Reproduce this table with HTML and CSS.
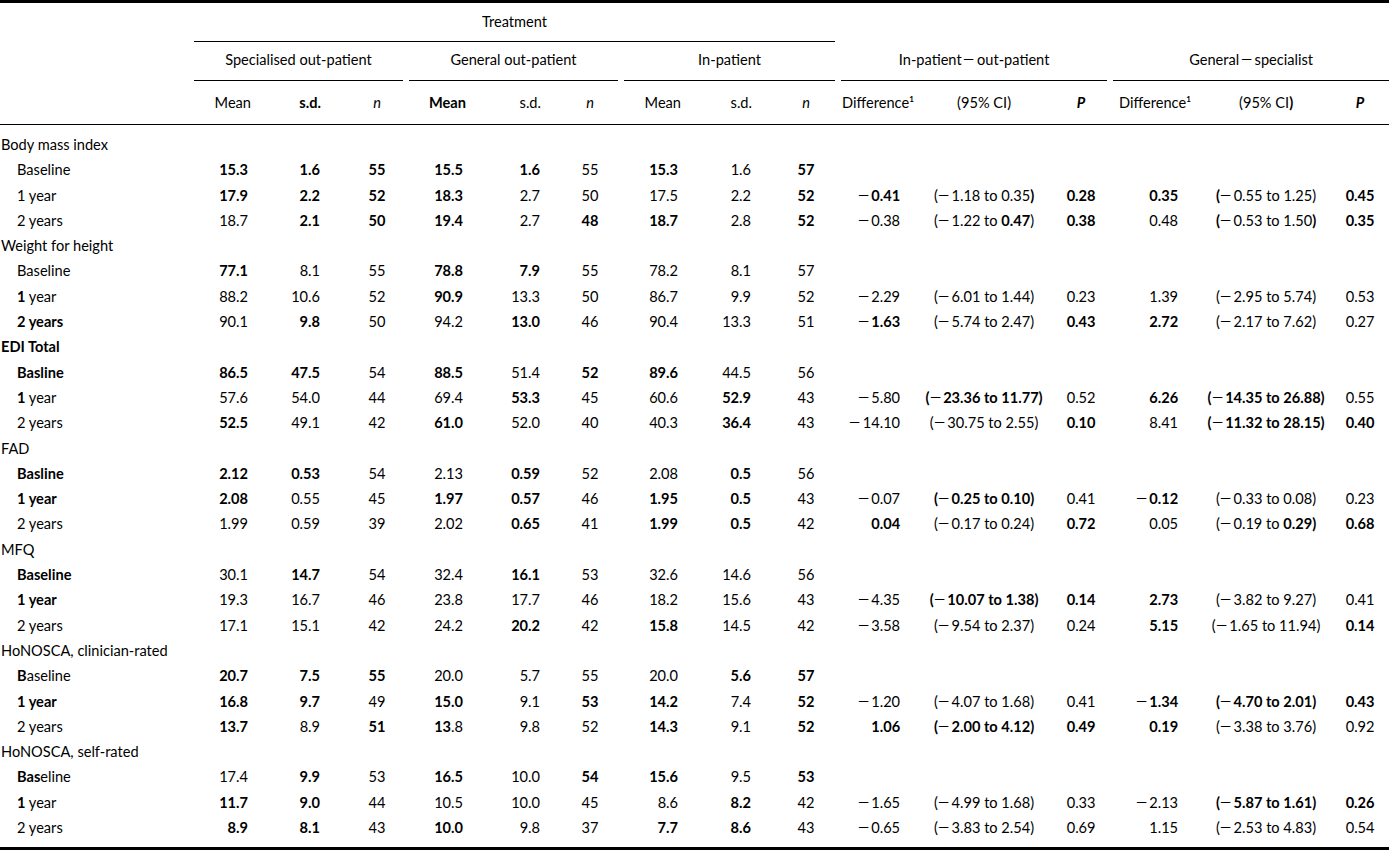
FILE: index.html
```html
<!DOCTYPE html>
<html lang="en">
<head>
<meta charset="utf-8">
<title>Outcome table</title>
<link rel="stylesheet" href="styles.css">
</head>
<body>
<table class="t">
  <colgroup>
    <col class="w-lbl"><col class="w-mean"><col class="w-sd1"><col class="w-n1">
    <col class="w-mean"><col class="w-sd2"><col class="w-n2">
    <col class="w-mean"><col class="w-sd3"><col class="w-n3">
    <col class="w-diff1"><col class="w-ci1"><col class="w-p1">
    <col class="w-diff2"><col class="w-ci2"><col class="w-p2">
  </colgroup>
  <thead>
    <tr class="hr-a">
      <th rowspan="3" class="h-blank"></th>
      <th colspan="9" class="h-span"><div class="rule-cell rule-a gap">Treatment</div></th>
      <th colspan="6" class="h-empty"></th>
    </tr>
    <tr class="hr-b">
      <th colspan="3" class="h-span"><div class="rule-cell rule-b gap">Specialised out-patient</div></th>
      <th colspan="3" class="h-span"><div class="rule-cell rule-b gap">General out-patient</div></th>
      <th colspan="3" class="h-span"><div class="rule-cell rule-b gap">In-patient</div></th>
      <th colspan="3" class="h-span"><div class="rule-cell rule-b gap">In-patient&#8201;<span class="neg">&#8722;</span>out-patient</div></th>
      <th colspan="3" class="h-span"><div class="rule-cell rule-b">General&#8201;<span class="neg">&#8722;</span>specialist</div></th>
    </tr>
    <tr class="hr-c">
      <th class="h-mean">Mean</th><th class="h-sd"><b>s.d.</b></th><th class="h-n n1">n</th>
      <th class="h-mean"><b>Mean</b></th><th class="h-sd">s.d.</th><th class="h-n n2">n</th>
      <th class="h-mean">Mean</th><th class="h-sd">s.d.</th><th class="h-n n3">n</th>
      <th class="h-diff d1">Difference<sup>1</sup></th><th class="h-ci">(95% CI)</th><th class="h-p p1">P</th>
      <th class="h-diff d2">Difference<sup>1</sup></th><th class="h-ci">(95% CI<b>)</b></th><th class="h-p p2">P</th>
    </tr>
  </thead>
  <tbody>
    <tr class="grp first"><td colspan="16">Body mass index</td></tr>
    <tr class="row"><td>Baseline</td><td><b>15.3</b></td><td><b>1.6</b></td><td><b>55</b></td><td><b>15.5</b></td><td><b>1.6</b></td><td>55</td><td><b>15.3</b></td><td>1.6</td><td><b>57</b></td><td></td><td></td><td></td><td></td><td></td><td></td></tr>
    <tr class="row"><td>1 year</td><td><b>17.9</b></td><td><b>2.2</b></td><td><b>52</b></td><td><b>18.3</b></td><td>2.7</td><td>50</td><td>17.5</td><td>2.2</td><td><b>52</b></td><td><span class="neg">&#8722;</span><b>0.41</b></td><td>(<span class="neg">&#8722;</span>1.18 to 0.35<b>)</b></td><td><b>0.28</b></td><td><b>0.35</b></td><td><b>(</b><span class="neg">&#8722;</span>0.55 to 1.25)</td><td><b>0.45</b></td></tr>
    <tr class="row"><td>2 years</td><td>18.7</td><td><b>2.1</b></td><td><b>50</b></td><td><b>19.4</b></td><td>2.7</td><td><b>48</b></td><td><b>18.7</b></td><td>2.8</td><td><b>52</b></td><td><span class="neg">&#8722;</span>0.38</td><td>(<span class="neg">&#8722;</span>1.22 to <b>0.47</b>)</td><td><b>0.38</b></td><td>0.48</td><td><b>(</b><span class="neg">&#8722;</span>0.53 to 1.50<b>)</b></td><td><b>0.35</b></td></tr>
    <tr class="grp"><td colspan="16">Weight for height</td></tr>
    <tr class="row"><td>Baseline</td><td><b>77.1</b></td><td>8.1</td><td>55</td><td><b>78.8</b></td><td><b>7.9</b></td><td>55</td><td>78.2</td><td>8.1</td><td>57</td><td></td><td></td><td></td><td></td><td></td><td></td></tr>
    <tr class="row"><td><b>1</b> year</td><td>88.2</td><td>10.6</td><td>52</td><td><b>90.9</b></td><td>13.3</td><td>50</td><td>86.7</td><td>9.9</td><td>52</td><td><span class="neg">&#8722;</span>2.29</td><td>(<span class="neg">&#8722;</span>6.01 to 1.44)</td><td>0.23</td><td>1.39</td><td>(<span class="neg">&#8722;</span>2.95 to 5.74)</td><td>0.53</td></tr>
    <tr class="row"><td><b>2 years</b></td><td>90.1</td><td><b>9.8</b></td><td>50</td><td>94.2</td><td><b>13.0</b></td><td>46</td><td>90.4</td><td>13.3</td><td>51</td><td><span class="neg">&#8722;</span><b>1.63</b></td><td>(<span class="neg">&#8722;</span>5.74 to 2.47)</td><td><b>0.43</b></td><td><b>2.72</b></td><td>(<span class="neg">&#8722;</span>2.17 to 7.62)</td><td>0.27</td></tr>
    <tr class="grp"><td colspan="16"><b>EDI Total</b></td></tr>
    <tr class="row"><td><b>Basline</b></td><td><b>86.5</b></td><td><b>47.5</b></td><td>54</td><td><b>88.5</b></td><td>51.4</td><td><b>52</b></td><td><b>89.6</b></td><td>44.5</td><td>56</td><td></td><td></td><td></td><td></td><td></td><td></td></tr>
    <tr class="row"><td><b>1</b> year</td><td>57.6</td><td>54.0</td><td>44</td><td>69.4</td><td><b>53.3</b></td><td>45</td><td>60.6</td><td><b>52.9</b></td><td>43</td><td><span class="neg">&#8722;</span>5.80</td><td><b>(<span class="neg">&#8722;</span>23.36 to 11.77)</b></td><td>0.52</td><td><b>6.26</b></td><td><b>(<span class="neg">&#8722;</span>14.35 to 26.88)</b></td><td>0.55</td></tr>
    <tr class="row"><td>2 years</td><td><b>52.5</b></td><td>49.1</td><td>42</td><td><b>61.0</b></td><td>52.0</td><td>40</td><td>40.3</td><td><b>36.4</b></td><td>43</td><td><span class="neg">&#8722;</span>14.10</td><td>(<span class="neg">&#8722;</span>30.75 to 2.55)</td><td><b>0.10</b></td><td>8.41</td><td><b>(<span class="neg">&#8722;</span>11.32 to 28.15)</b></td><td><b>0.40</b></td></tr>
    <tr class="grp"><td colspan="16">FAD</td></tr>
    <tr class="row"><td><b>Basline</b></td><td><b>2.12</b></td><td><b>0.53</b></td><td>54</td><td>2.13</td><td><b>0.59</b></td><td>52</td><td>2.08</td><td><b>0.5</b></td><td>56</td><td></td><td></td><td></td><td></td><td></td><td></td></tr>
    <tr class="row"><td><b>1 year</b></td><td><b>2.08</b></td><td>0.55</td><td>45</td><td><b>1.97</b></td><td><b>0.57</b></td><td>46</td><td><b>1.95</b></td><td><b>0.5</b></td><td>43</td><td><span class="neg">&#8722;</span>0.07</td><td><b>(<span class="neg">&#8722;</span>0.25 to 0.10)</b></td><td>0.41</td><td><span class="neg">&#8722;</span><b>0.12</b></td><td>(<span class="neg">&#8722;</span>0.33 to 0.08)</td><td>0.23</td></tr>
    <tr class="row"><td>2 years</td><td>1.99</td><td>0.59</td><td>39</td><td>2.02</td><td><b>0.65</b></td><td>41</td><td><b>1.99</b></td><td><b>0.5</b></td><td>42</td><td><b>0.04</b></td><td>(<span class="neg">&#8722;</span>0.17 to 0.24)</td><td><b>0.72</b></td><td>0.05</td><td>(<span class="neg">&#8722;</span>0.19 to <b>0.29)</b></td><td><b>0.68</b></td></tr>
    <tr class="grp"><td colspan="16">MFQ</td></tr>
    <tr class="row"><td><b>Baseline</b></td><td>30.1</td><td><b>14.7</b></td><td>54</td><td>32.4</td><td><b>16.1</b></td><td>53</td><td>32.6</td><td>14.6</td><td>56</td><td></td><td></td><td></td><td></td><td></td><td></td></tr>
    <tr class="row"><td><b>1 year</b></td><td>19.3</td><td>16.7</td><td>46</td><td>23.8</td><td>17.7</td><td>46</td><td>18.2</td><td>15.6</td><td>43</td><td><span class="neg">&#8722;</span>4.35</td><td><b>(<span class="neg">&#8722;</span>10.07 to 1.38)</b></td><td><b>0.14</b></td><td><b>2.73</b></td><td>(<span class="neg">&#8722;</span>3.82 to 9.27)</td><td>0.41</td></tr>
    <tr class="row"><td>2 years</td><td>17.1</td><td>15.1</td><td>42</td><td>24.2</td><td><b>20.2</b></td><td>42</td><td><b>15.8</b></td><td>14.5</td><td>42</td><td><span class="neg">&#8722;</span>3.58</td><td>(<span class="neg">&#8722;</span>9.54 to 2.37)</td><td>0.24</td><td><b>5.15</b></td><td>(<span class="neg">&#8722;</span>1.65 to 11.94)</td><td><b>0.14</b></td></tr>
    <tr class="grp"><td colspan="16">HoNOSCA, clinician-rated</td></tr>
    <tr class="row"><td><b>B</b>aseline</td><td><b>20.7</b></td><td><b>7.5</b></td><td><b>55</b></td><td>20.0</td><td>5.7</td><td>55</td><td>20.0</td><td><b>5.6</b></td><td><b>57</b></td><td></td><td></td><td></td><td></td><td></td><td></td></tr>
    <tr class="row"><td><b>1 year</b></td><td><b>16.8</b></td><td><b>9.7</b></td><td>49</td><td><b>15.0</b></td><td>9.1</td><td><b>53</b></td><td><b>14.2</b></td><td>7.4</td><td><b>52</b></td><td><span class="neg">&#8722;</span>1.20</td><td>(<span class="neg">&#8722;</span>4.07 to 1.68)</td><td>0.41</td><td><span class="neg">&#8722;</span><b>1.34</b></td><td><b>(<span class="neg">&#8722;</span>4.70 to 2.01)</b></td><td><b>0.43</b></td></tr>
    <tr class="row"><td>2 years</td><td><b>13.7</b></td><td>8.9</td><td><b>51</b></td><td><b>13</b>.8</td><td>9.8</td><td>52</td><td><b>14.3</b></td><td>9.1</td><td><b>52</b></td><td><b>1.06</b></td><td><b>(<span class="neg">&#8722;</span>2.00 to 4.12)</b></td><td><b>0.49</b></td><td><b>0.19</b></td><td>(<span class="neg">&#8722;</span>3.38 to 3.76)</td><td>0.92</td></tr>
    <tr class="grp"><td colspan="16">HoNOSCA, self-rated</td></tr>
    <tr class="row"><td><b>Bas</b>eline</td><td>17.4</td><td><b>9.9</b></td><td>53</td><td><b>16.5</b></td><td>10.0</td><td><b>54</b></td><td><b>15.6</b></td><td>9.5</td><td><b>53</b></td><td></td><td></td><td></td><td></td><td></td><td></td></tr>
    <tr class="row"><td><b>1</b> year</td><td><b>11.7</b></td><td><b>9.0</b></td><td>44</td><td>10.5</td><td>10.0</td><td>45</td><td>8.6</td><td><b>8.2</b></td><td>42</td><td><span class="neg">&#8722;</span>1.65</td><td>(<span class="neg">&#8722;</span>4.99 to 1.68)</td><td>0.33</td><td><span class="neg">&#8722;</span>2.13</td><td><b>(<span class="neg">&#8722;</span>5.87 to 1.61)</b></td><td><b>0.26</b></td></tr>
    <tr class="row last"><td>2 years</td><td><b>8.9</b></td><td><b>8.1</b></td><td>43</td><td><b>10.0</b></td><td>9.8</td><td>37</td><td><b>7.7</b></td><td><b>8.6</b></td><td>43</td><td><span class="neg">&#8722;</span>0.65</td><td>(<span class="neg">&#8722;</span>3.83 to 2.54)</td><td>0.69</td><td>1.15</td><td>(<span class="neg">&#8722;</span>2.53 to 4.83)</td><td>0.54</td></tr>
  </tbody>
</table>
</body>
</html>
```

FILE: styles.css
```css
html, body {
  margin: 0;
  padding: 0;
  background: #fff;
}

body {
  font-family: "Lato", "Open Sans", "Liberation Sans", sans-serif;
  font-size: 14.6px;
  color: #000;
}

b { font-weight: 700; }

.neg {
  display: inline-block;
  width: 0.78em;
  margin-right: 0.15em;
  text-align: center;
  transform: scaleX(1.5);
  font-weight: 400;
}

.t {
  width: 1389px;
  table-layout: fixed;
  border-collapse: separate;
  border-spacing: 0;
  border-top: 3px solid #000;
  border-bottom: 3px solid #000;
}

.w-lbl { width: 194px; }
.w-mean { width: 64px; }
.w-sd1 { width: 72px; }
.w-n1 { width: 79px; }
.w-sd2 { width: 77px; }
.w-n2 { width: 74px; }
.w-sd3 { width: 73px; }
.w-n3 { width: 80px; }
.w-diff1 { width: 69px; }
.w-ci1 { width: 148px; }
.w-p1 { width: 55px; }
.w-diff2 { width: 75px; }
.w-ci2 { width: 156px; }
.w-p2 { width: 45px; }

th {
  font-weight: 400;
  padding: 0;
  white-space: nowrap;
}

/* header rows */
.h-blank {
  border-bottom: 1px solid #000;
}

.h-span {
  vertical-align: bottom;
}

.rule-cell {
  border-bottom: 1px solid #000;
  text-align: center;
  box-sizing: border-box;
}

.rule-a {
  height: 39px;
  line-height: 38px;
}

.rule-b {
  height: 39px;
  line-height: 36px;
}

.rule-cell.gap {
  margin-right: 6px;
}

.hr-c th {
  height: 44px;
  border-bottom: 1px solid #000;
  box-sizing: border-box;
  line-height: 42px;
}

.h-mean, .h-sd { text-align: right; padding-right: 7px; }
.h-sd { padding-right: 9px; }
.h-n { font-style: italic; text-align: center; }
.n1 { padding-left: 15px; }
.n2 { padding-left: 6px; }
.n3 { padding-left: 10px; }
.h-diff { text-align: left; }
.d1 { padding-left: 1px; }
.d2 { padding-left: 6px; }
.h-ci { text-align: center; }
.h-p { font-style: italic; font-weight: 700; text-align: center; }
.p1 { padding-right: 9px; }
.p2 { padding-right: 13px; }

sup {
  font-size: 8px;
  line-height: 0;
  vertical-align: 6px;
  font-weight: 700;
}

/* body */
tbody td {
  padding: 0;
  height: 25.3px;
  line-height: 25.3px;
  white-space: nowrap;
}

.grp td {
  padding-left: 1px;
  text-align: left;
}

.first td { padding-top: 7px; }
.last td { padding-bottom: 7px; }

.row td:nth-child(1) { padding-left: 17px; }

.row td:nth-child(2),
.row td:nth-child(5),
.row td:nth-child(8) { text-align: right; padding-right: 10px; }

.row td:nth-child(3),
.row td:nth-child(6),
.row td:nth-child(9) { text-align: right; padding-right: 10px; }

.row td:nth-child(4) { text-align: center; padding-left: 15px; }
.row td:nth-child(7) { text-align: center; padding-left: 6px; }
.row td:nth-child(10) { text-align: center; padding-left: 10px; }

.row td:nth-child(11) { text-align: right; padding-right: 10px; }
.row td:nth-child(12) { text-align: center; }
.row td:nth-child(13) { text-align: center; padding-right: 9px; }
.row td:nth-child(14) { text-align: right; padding-right: 10px; }
.row td:nth-child(15) { text-align: center; }
.row td:nth-child(16) { text-align: center; padding-right: 13px; }
```
